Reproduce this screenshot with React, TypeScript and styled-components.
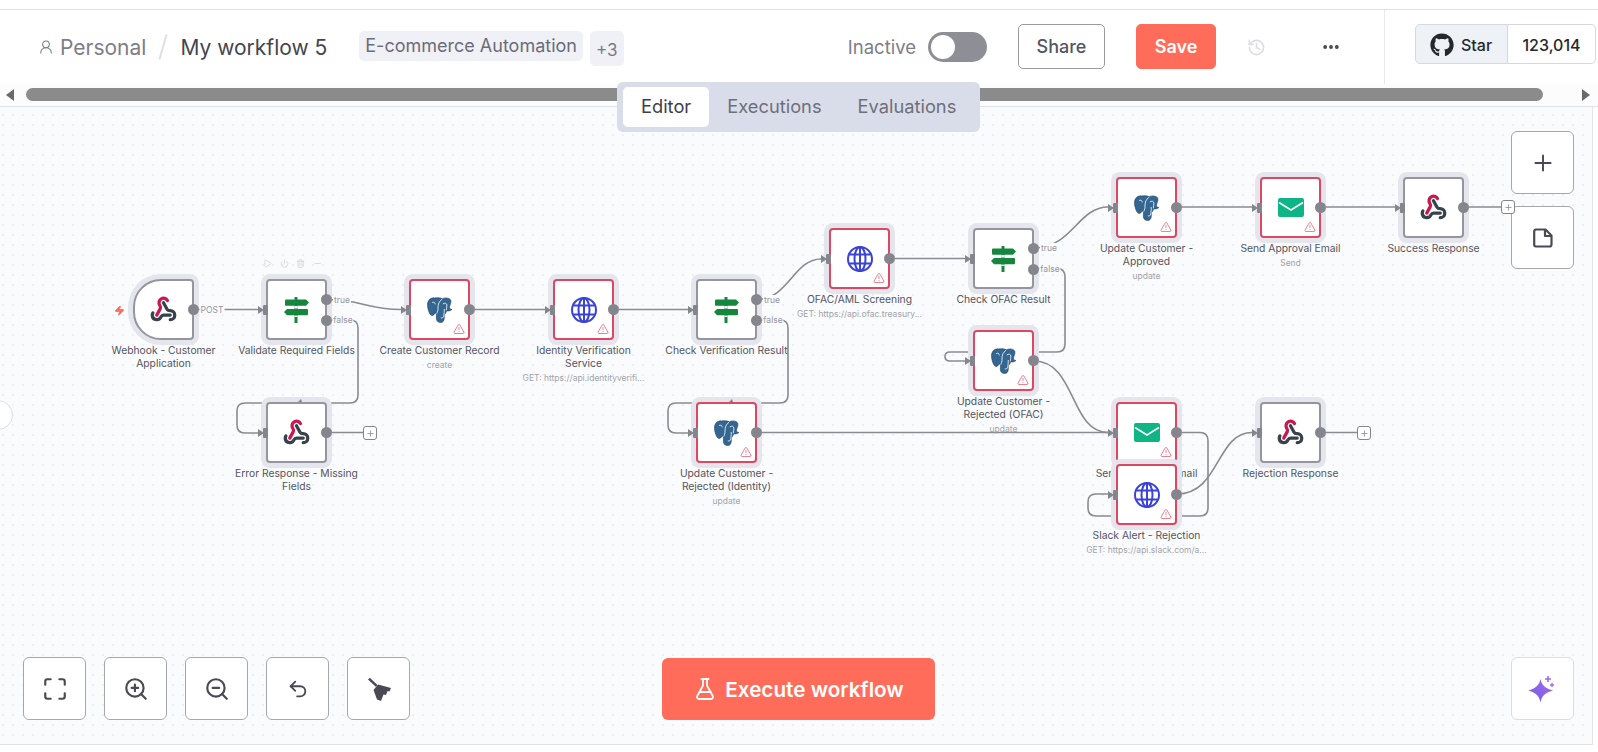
import React from "react";
import styled, { createGlobalStyle } from "styled-components";
import {
  Plus,
  Maximize,
  ZoomIn,
  ZoomOut,
  Undo2,
  FlaskConical,
  History,
  Ellipsis,
  UserRound,
  TriangleAlert,
  Play,
  Power,
  Trash2,
  Minus,
  Zap,
} from "lucide-react";
import { FaGithub } from "react-icons/fa";

const CANVAS_TOP = 107;

type Kind = "webhook" | "if" | "postgres" | "http" | "mail";

type NodeData = {
  x: number;
  y: number;
  kind: Kind;
  label: string;
  sub?: string;
  error?: boolean;
  trigger?: boolean;
  outputs?: number;
};

const nodes: NodeData[] = [
  { x: 133, y: 279, kind: "webhook", label: "Webhook - Customer\nApplication", trigger: true },
  { x: 266, y: 279, kind: "if", label: "Validate Required Fields", outputs: 2 },
  { x: 409, y: 279, kind: "postgres", label: "Create Customer Record", sub: "create", error: true },
  { x: 553, y: 279, kind: "http", label: "Identity Verification\nService", sub: "GET: https://api.identityverifi...", error: true },
  { x: 696, y: 279, kind: "if", label: "Check Verification Result", outputs: 2 },
  { x: 829, y: 228, kind: "http", label: "OFAC/AML Screening", sub: "GET: https://api.ofac.treasury...", error: true },
  { x: 973, y: 228, kind: "if", label: "Check OFAC Result", outputs: 2 },
  { x: 1116, y: 177, kind: "postgres", label: "Update Customer -\nApproved", sub: "update", error: true },
  { x: 1260, y: 177, kind: "mail", label: "Send Approval Email", sub: "Send", error: true },
  { x: 1403, y: 177, kind: "webhook", label: "Success Response" },
  { x: 266, y: 402, kind: "webhook", label: "Error Response - Missing\nFields" },
  { x: 696, y: 402, kind: "postgres", label: "Update Customer -\nRejected (Identity)", sub: "update", error: true },
  { x: 973, y: 330, kind: "postgres", label: "Update Customer -\nRejected (OFAC)", sub: "update", error: true },
  { x: 1116, y: 402, kind: "mail", label: "Send Rejection Email", sub: "Send", error: true },
  { x: 1260, y: 402, kind: "webhook", label: "Rejection Response" },
  { x: 1116, y: 464, kind: "http", label: "Slack Alert - Rejection", sub: "GET: https://api.slack.com/a...", error: true },
];

const edges: string[] = [
  "M194 309.5 H258",
  "M327 299.5 C362 299.5 366 309.5 401 309.5",
  "M327 320 H350 Q358 320 358 328 V395 Q358 403 350 403 H245 Q237 403 237 411 V425 Q237 433 245 433 H258",
  "M470 309.5 H545",
  "M614 309.5 H688",
  "M757 299.5 C788 299.5 794 259 821 259",
  "M757 320 H780 Q788 320 788 328 V395 Q788 403 780 403 H676 Q668 403 668 411 V425 Q668 433 676 433 H688",
  "M890 258.5 H965",
  "M1034 248 C1072 248 1078 207 1108 207",
  "M1034 268.5 H1057 Q1065 268.5 1065 277 V344 Q1065 352 1057 352 H950 Q945 352 945 356.5 Q945 361 950 361 H965",
  "M1177 207 H1252",
  "M1321 207 H1395",
  "M1464 207 H1501",
  "M327 432.5 H363",
  "M757 432.5 H1108",
  "M1034 361 C1076 361 1070 432.5 1108 432.5",
  "M1177 432.5 H1200 Q1208 432.5 1208 441 V508 Q1208 516 1200 516 H1096 Q1088 516 1088 508 V502 Q1088 494 1096 494 H1109",
  "M1177 494 C1220 494 1216 432.5 1252 432.5",
  "M1321 432.5 H1357",
];

const edgeLabels = [
  { x: 212, y: 309.5, text: "POST" },
  { x: 342, y: 299.5, text: "true" },
  { x: 343, y: 320, text: "false" },
  { x: 772, y: 299.5, text: "true" },
  { x: 773, y: 320, text: "false" },
  { x: 1049, y: 248, text: "true" },
  { x: 1050, y: 268.5, text: "false" },
];

const GlobalStyle = createGlobalStyle`
  html, body {
    margin: 0;
    padding: 0;
    background: #fff;
    font-family: "Inter", "Liberation Sans", sans-serif;
  }
  * {
    box-sizing: border-box;
  }
`;

const Page = styled.div`
  width: 1598px;
  height: 752px;
  overflow: hidden;
  position: relative;
  padding-top: 9px;
  display: flex;
  flex-direction: column;
  background: #fff;
`;

const Header = styled.header`
  height: 75px;
  flex: 0 0 auto;
  display: flex;
  align-items: center;
  border-top: 1px solid #dfe0e5;
  padding-left: 38px;
`;

const OwnerIcon = styled(UserRound)`
  color: #7d7d87;
  margin-right: 6px;
`;

const Owner = styled.span`
  font-size: 21px;
  color: #7d7d87;
`;

const Slash = styled.span`
  width: 2px;
  height: 26px;
  margin: 0 16px;
  background: #dcdfe8;
  transform: rotate(16deg);
`;

const Title = styled.span`
  font-size: 21px;
  color: #45454f;
  margin-right: 32px;
`;

const Tags = styled.div`
  display: flex;
  align-items: flex-start;
  gap: 7px;
  height: 35px;
  margin-top: 3px;
`;

const Tag = styled.span`
  height: 30px;
  line-height: 30px;
  padding: 0 6px;
  background: #f0f1f6;
  border-radius: 5px;
  font-size: 18px;
  color: #6c6c78;
`;

const MoreTag = styled(Tag)`
  height: 35px;
  line-height: 38px;
  padding: 0 6px;
  color: #7a7a86;
  font-size: 17px;
`;

const Actions = styled.div`
  margin-left: auto;
  display: flex;
  align-items: center;
`;

const StatusText = styled.span`
  font-size: 18.5px;
  color: #7d7d87;
  margin-right: 12px;
`;

const Toggle = styled.span`
  width: 59px;
  height: 30px;
  border-radius: 15px;
  background: #8e8e97;
  padding: 3px;
  margin-right: 31px;
  display: flex;
`;

const Knob = styled.span`
  width: 24px;
  height: 24px;
  border-radius: 50%;
  background: #fff;
`;

const HeaderButton = styled.button<{ $primary?: boolean }>`
  height: 45px;
  border-radius: 5px;
  font-family: inherit;
  font-size: 18px;
  font-weight: ${(p) => (p.$primary ? 600 : 500)};
  color: ${(p) => (p.$primary ? "#fff" : "#55555f")};
  background: ${(p) => (p.$primary ? "#ff6d5a" : "#fff")};
  border: 1px solid ${(p) => (p.$primary ? "#ff6d5a" : "#9a9aa3")};
  width: ${(p) => (p.$primary ? "80px" : "87px")};
  margin-right: 31px;
  margin-top: -2px;
`;

const HistoryIcon = styled(History)`
  color: #dcdde3;
  margin-right: 55px;
`;

const DotsIcon = styled(Ellipsis)`
  color: #45454f;
  margin-right: 43px;
`;

const GithubArea = styled.div`
  height: 74px;
  width: 214px;
  border-left: 1px solid #e8e9ee;
  padding: 14px 2px 0 30px;
  display: flex;
  align-items: flex-start;
`;

const StarButton = styled.div`
  height: 40px;
  width: 93px;
  display: flex;
  align-items: center;
  gap: 7px;
  padding: 2px 0 0 14px;
  background: #eef1f5;
  border: 1px solid #d5d8de;
  border-radius: 5px 0 0 5px;
  font-size: 16px;
  font-weight: 500;
  color: #25292e;
`;

const StarCount = styled.div`
  height: 40px;
  flex: 1;
  display: flex;
  align-items: center;
  justify-content: center;
  padding-top: 2px;
  border: 1px solid #d5d8de;
  border-left: 0;
  border-radius: 0 5px 5px 0;
  font-size: 16px;
  font-weight: 500;
  color: #25292e;
`;

const ScrollRow = styled.div`
  height: 23px;
  flex: 0 0 auto;
  display: flex;
  align-items: center;
  padding: 0 8px 1px 6px;
  background: #fcfcfc;
  border-bottom: 1px solid #dfe1e8;
`;

const ScrollArrow = styled.span<{ $right?: boolean }>`
  width: 0;
  height: 0;
  border-top: 6px solid transparent;
  border-bottom: 6px solid transparent;
  ${(p) => (p.$right ? "border-left: 8px solid #6a6a6a;" : "border-right: 8px solid #6a6a6a;")}
`;

const ScrollThumb = styled.span`
  flex: 1;
  height: 13px;
  margin: 0 39px 0 12px;
  border-radius: 7px;
  background: #8b8b8b;
`;

const TabBar = styled.div`
  position: absolute;
  left: 617px;
  top: 82px;
  height: 50px;
  display: flex;
  align-items: center;
  padding: 0 6px;
  background: #d9dde9;
  border-radius: 6px;
  z-index: 5;
`;

const TabItem = styled.span<{ $active?: boolean }>`
  height: 40px;
  line-height: 38px;
  padding: 0 18px;
  font-size: 18.3px;
  font-weight: 400;
  border-radius: 5px;
  color: ${(p) => (p.$active ? "#3e3e48" : "#6f6f7b")};
  background: ${(p) => (p.$active ? "#fff" : "transparent")};
`;

const Canvas = styled.main`
  position: relative;
  width: 1593px;
  height: 638px;
  flex: 0 0 auto;
  background-color: #fafbfd;
  background-image: radial-gradient(circle, #e9ebef 0.6px, transparent 1px);
  background-size: 10px 10px;
  background-position: -2px 3px;
  border-right: 1px solid #e4e5ea;
  border-bottom: 1px solid #dfe1e8;
  overflow: hidden;
`;

const CollapseHandle = styled.span`
  position: absolute;
  left: -17px;
  top: 293px;
  width: 30px;
  height: 30px;
  border-radius: 50%;
  background: #fff;
  border: 1px solid #dcdde3;
`;

const EdgeLayer = styled.svg`
  position: absolute;
  left: 0;
  top: 0;
`;

const EdgeLine = styled.path`
  fill: none;
  stroke: #8a8a92;
  stroke-width: 1.6;
`;

const EdgeLabel = styled.span<{ $x: number; $y: number }>`
  position: absolute;
  left: ${(p) => p.$x}px;
  top: ${(p) => p.$y - CANVAS_TOP}px;
  transform: translate(-50%, -50%);
  padding: 0 1px;
  font-size: 8.5px;
  line-height: 10px;
  color: #95959d;
  background: #fafbfd;
`;

const EdgeTick = styled.span<{ $x: number; $y: number }>`
  position: absolute;
  left: ${(p) => p.$x}px;
  top: ${(p) => p.$y - CANVAS_TOP}px;
  width: 0;
  height: 0;
  border-left: 3px solid transparent;
  border-right: 1px solid transparent;
  border-bottom: 3px solid #85858d;
  z-index: 2;
`;

const NodeBox = styled.div<{ $x: number; $y: number; $error?: boolean; $trigger?: boolean }>`
  position: absolute;
  left: ${(p) => p.$x}px;
  top: ${(p) => p.$y - CANVAS_TOP}px;
  width: 61px;
  height: 61px;
  display: flex;
  align-items: center;
  justify-content: center;
  background: #fff;
  border: 2px solid ${(p) => (p.$error ? "#dc4762" : "#95959e")};
  border-radius: ${(p) => (p.$trigger ? "28px 4px 4px 28px" : "4px")};
  box-shadow: 0 0 0 5px #e4e5ed;
`;

const NodeLabel = styled.div`
  position: absolute;
  top: 63px;
  left: 50%;
  width: 170px;
  margin-left: -85px;
  text-align: center;
  font-size: 10.3px;
  line-height: 13px;
  white-space: pre-line;
  color: #555560;
`;

const NodeSub = styled.div`
  margin-top: 2px;
  font-size: 8.5px;
  line-height: 12px;
  color: #a3a3ab;
`;

const InputHandle = styled.span`
  position: absolute;
  left: -5px;
  top: 23.5px;
  width: 5px;
  height: 10px;
  background: #85858d;
  border-radius: 1px;
  &::before {
    content: "";
    position: absolute;
    left: -5.5px;
    top: 1px;
    width: 0;
    height: 0;
    border-top: 4px solid transparent;
    border-bottom: 4px solid transparent;
    border-left: 6px solid #85858d;
  }
`;

const OutputHandle = styled.span<{ $top: number }>`
  position: absolute;
  right: -7px;
  top: ${(p) => p.$top}px;
  width: 11px;
  height: 11px;
  border-radius: 50%;
  background: #85858d;
`;

const WarnIcon = styled(TriangleAlert)`
  position: absolute;
  right: 3px;
  bottom: 3px;
  color: #e8556d;
`;

const BoltIcon = styled(Zap)`
  position: absolute;
  left: -21px;
  top: 24px;
  color: #ff6d5a;
  fill: #ff6d5a;
`;

const NodeToolbar = styled.div`
  position: absolute;
  top: -22px;
  left: -6px;
  width: 61px;
  display: flex;
  justify-content: space-between;
  padding: 0 1px;
  color: #cfd0d7;
`;

const AddBox = styled.span<{ $x: number; $y: number }>`
  position: absolute;
  left: ${(p) => p.$x}px;
  top: ${(p) => p.$y - CANVAS_TOP}px;
  width: 14px;
  height: 14px;
  display: flex;
  align-items: center;
  justify-content: center;
  background: #fff;
  border: 1px solid #85858d;
  border-radius: 3px;
  color: #85858d;
  z-index: 4;
`;

const ToolButton = styled.button<{ $soft?: boolean }>`
  width: 63px;
  height: 63px;
  padding: 0;
  display: flex;
  align-items: center;
  justify-content: center;
  background: #fff;
  border: 1px solid ${(p) => (p.$soft ? "#dcdde3" : "#a6a6ae")};
  border-radius: 6px;
  color: #4a4a55;
`;

const ZoomTools = styled.div`
  position: absolute;
  left: 23px;
  bottom: 24px;
  display: flex;
  gap: 18px;
  z-index: 3;
`;

const SideTools = styled.div`
  position: absolute;
  left: 1511px;
  top: 24px;
  display: flex;
  flex-direction: column;
  gap: 12px;
  z-index: 3;
`;

const AskTool = styled.div`
  position: absolute;
  left: 1511px;
  bottom: 24px;
  z-index: 3;
`;

const ExecuteButton = styled.button`
  position: absolute;
  left: 662px;
  bottom: 24px;
  width: 273px;
  height: 62px;
  display: flex;
  align-items: center;
  justify-content: center;
  gap: 8px;
  background: #ff6d5a;
  border: 0;
  border-radius: 6px;
  font-family: inherit;
  font-size: 20.7px;
  font-weight: 600;
  color: #fff;
  z-index: 3;
`;

function WebhookIcon() {
  return (
    <svg width="27" height="27" viewBox="0 0 24 24" fill="none" strokeWidth="2.9" strokeLinecap="round">
      <path d="M18 16.98h-5.99c-1.1 0-1.95.94-2.48 1.9A4 4 0 0 1 2 17c.01-.7.2-1.4.57-2" stroke="#37424a" />
      <path d="m6 17 3.13-5.78c.53-.97.1-2.18-.5-3.1a4 4 0 1 1 6.89-4.06" stroke="#c9184f" />
      <path d="m12 6 3.13 5.73C15.66 12.7 16.9 13 18 13a4 4 0 0 1 0 8" stroke="#37424a" />
    </svg>
  );
}

function SignIcon() {
  return (
    <svg width="25" height="26" viewBox="0 0 25 26" fill="#16863f">
      <rect x="10.5" y="0" width="3" height="26" rx="0.5" />
      <rect x="10.5" y="9" width="3" height="2.5" fill="#fff" />
      <rect x="10.5" y="18.5" width="3" height="1.5" fill="#fff" />
      <path d="M2 2.500 H22 L25 5.600 L22 8.700 H2 Q1 8.700 1 7.700 V3.500 Q1 2.500 2 2.500 Z" />
      <path d="M3 12 H23 Q24 12 24 13 V17.200 Q24 18.200 23 18.200 H3 L0 15.100 Z" />
    </svg>
  );
}

function PostgresIcon() {
  return (
    <svg width="26" height="26" viewBox="0 0 26 26">
      <path
        d="M7 .8C2.800.8.300 4 .500 8.500c.2 3.500 1.800 8.700 3.900 9.800 1.600.8 2.800-.8 3.800-2.400l1.300.9-.2 4.200c0 3 1.900 4.500 4.400 4.500s3.500-2 3.600-4.500l.1-3.700c1.300-.6 1.900-2 2.200-3.500 1.600.5 4.100 0 5.300-1.300-2-.4-2.800-1-2.300-3 .9-3 2.700-6.200-.3-7.800-2-1.100-5-1-7 .1-2-1.200-5-1.200-8.100-.8Z"
        fill="#336791"
        stroke="#23405e"
        strokeWidth="0.6"
      />
      <path
        d="M15.200 2.200c-2.800 1.600-4.400 5-4.200 8.800.1 2.400-.6 4.200-1.300 5.600M5.200 5.500c1.500-.8 3 .2 3.200 1.800M17.200 12c.3 3-.4 5-.4 7-.1 1.600-1.600 2.500-3 1.800M15.800 7c2-1.300 3.700-1 4.100 1 .3 1.500-.8 4-.6 5.300"
        fill="none"
        stroke="#fff"
        strokeWidth="0.8"
      />
    </svg>
  );
}

function GlobeIcon() {
  return (
    <svg width="26" height="26" viewBox="0 0 26 26" fill="none" stroke="#3b42d6" strokeWidth="2">
      <circle cx="13" cy="13" r="12" />
      <ellipse cx="13" cy="13" rx="5.500" ry="12" />
      <path d="M13 1V25M2.500 8.500H23.500M2.500 17.500H23.500" />
    </svg>
  );
}

function MailIcon() {
  return (
    <svg width="26" height="19" viewBox="0 0 26 19">
      <rect width="26" height="19" rx="2" fill="#0fb585" />
      <path d="M1 4.500L13 12L25 4.500" fill="none" stroke="#fff" strokeWidth="1.500" />
    </svg>
  );
}

function NoteIcon() {
  return (
    <svg width="20" height="20" viewBox="0 0 20 20" fill="none" stroke="currentColor" strokeWidth="2.200" strokeLinejoin="round">
      <path d="M3 1.500H12.500L18.500 7.500V16.500A2 2 0 0 1 16.500 18.500H3A2 2 0 0 1 1.200 16.500V3.500A2 2 0 0 1 3 1.500Z" />
      <path d="M12 1.500V8H18.500" />
    </svg>
  );
}

function BroomIcon() {
  return (
    <svg width="24" height="24" viewBox="0 0 24 24" fill="currentColor">
      <path d="M1 2.500L2.800.8L10.500 8L8.800 9.800Z" />
      <path d="M6.500 13L11 7.500L24 11L22.500 14.500L20.500 14L19 18L16.500 17.500L14 24L10 22.500Z" />
    </svg>
  );
}

function SparkleIcon() {
  return (
    <svg width="30" height="30" viewBox="0 0 30 30">
      <defs>
        <linearGradient id="ask-ai" x1="0" y1="1" x2="1" y2="0">
          <stop offset="0" stopColor="#6a5ce8" />
          <stop offset="1" stopColor="#ad6be6" />
        </linearGradient>
      </defs>
      <path d="M12.500 5C13.800 11 16.500 14 25 16.500C16.500 19 13.800 22 12.500 28.500C11.200 22 8.500 19 .5 16.500C8.500 14 11.200 11 12.500 5Z" fill="url(#ask-ai)" />
      <path d="M20 2V8M17 5H23" stroke="#9a6ce6" strokeWidth="1.600" />
      <path d="M24 9V13M22 11H26" stroke="#a86de6" strokeWidth="1.400" />
    </svg>
  );
}

const icons: Record<Kind, React.ReactNode> = {
  webhook: <WebhookIcon />,
  if: <SignIcon />,
  postgres: <PostgresIcon />,
  http: <GlobeIcon />,
  mail: <MailIcon />,
};

function WorkflowNode({ node, toolbar }: { node: NodeData; toolbar?: boolean }) {
  return (
    <NodeBox $x={node.x} $y={node.y} $error={node.error} $trigger={node.trigger}>
      {toolbar && (
        <NodeToolbar>
          <Play size={9} />
          <Power size={9} />
          <Trash2 size={9} />
          <Minus size={9} />
        </NodeToolbar>
      )}
      {node.trigger ? <BoltIcon size={11} /> : <InputHandle />}
      {icons[node.kind]}
      {node.outputs === 2 ? (
        <>
          <OutputHandle $top={13} />
          <OutputHandle $top={33.5} />
        </>
      ) : (
        <OutputHandle $top={23} />
      )}
      {node.error && <WarnIcon size={12} strokeWidth={1.5} />}
      <NodeLabel>
        {node.label}
        {node.sub && <NodeSub>{node.sub}</NodeSub>}
      </NodeLabel>
    </NodeBox>
  );
}

export default function App() {
  return (
    <Page>
      <GlobalStyle />
      <Header>
        <OwnerIcon size={16} strokeWidth={1.6} />
        <Owner>Personal</Owner>
        <Slash />
        <Title>My workflow 5</Title>
        <Tags>
          <Tag>E-commerce Automation</Tag>
          <MoreTag>+3</MoreTag>
        </Tags>
        <Actions>
          <StatusText>Inactive</StatusText>
          <Toggle>
            <Knob />
          </Toggle>
          <HeaderButton>Share</HeaderButton>
          <HeaderButton $primary>Save</HeaderButton>
          <HistoryIcon size={19} />
          <DotsIcon size={20} strokeWidth={2.6} />
          <GithubArea>
            <StarButton>
              <FaGithub size={24} />
              Star
            </StarButton>
            <StarCount>123,014</StarCount>
          </GithubArea>
        </Actions>
      </Header>
      <ScrollRow>
        <ScrollArrow />
        <ScrollThumb />
        <ScrollArrow $right />
      </ScrollRow>
      <TabBar>
        <TabItem $active>Editor</TabItem>
        <TabItem>Executions</TabItem>
        <TabItem>Evaluations</TabItem>
      </TabBar>
      <Canvas>
        <CollapseHandle />
        <EdgeLayer width="1593" height="638" viewBox={`0 ${CANVAS_TOP} 1593 638`}>
          {edges.map((d) => (
            <EdgeLine key={d} d={d} />
          ))}
        </EdgeLayer>
        {nodes.map((node, i) => (
          <WorkflowNode key={node.label} node={node} toolbar={i === 1} />
        ))}
        {edgeLabels.map((l) => (
          <EdgeLabel key={`${l.x}-${l.y}`} $x={l.x} $y={l.y}>
            {l.text}
          </EdgeLabel>
        ))}
        <EdgeTick $x={298} $y={399} />
        <EdgeTick $x={729} $y={399} />
        <AddBox $x={363} $y={426}>
          <Plus size={9} />
        </AddBox>
        <AddBox $x={1357} $y={426}>
          <Plus size={9} />
        </AddBox>
        <AddBox $x={1501} $y={200}>
          <Plus size={9} />
        </AddBox>
        <SideTools>
          <ToolButton>
            <Plus size={26} strokeWidth={1.8} />
          </ToolButton>
          <ToolButton>
            <NoteIcon />
          </ToolButton>
        </SideTools>
        <ZoomTools>
          <ToolButton>
            <Maximize size={26} strokeWidth={2} />
          </ToolButton>
          <ToolButton>
            <ZoomIn size={26} strokeWidth={2} />
          </ToolButton>
          <ToolButton>
            <ZoomOut size={26} strokeWidth={2} />
          </ToolButton>
          <ToolButton>
            <Undo2 size={22} strokeWidth={2} />
          </ToolButton>
          <ToolButton>
            <BroomIcon />
          </ToolButton>
        </ZoomTools>
        <ExecuteButton>
          <FlaskConical size={24} strokeWidth={1.8} />
          Execute workflow
        </ExecuteButton>
        <AskTool>
          <ToolButton $soft>
            <SparkleIcon />
          </ToolButton>
        </AskTool>
      </Canvas>
    </Page>
  );
}
